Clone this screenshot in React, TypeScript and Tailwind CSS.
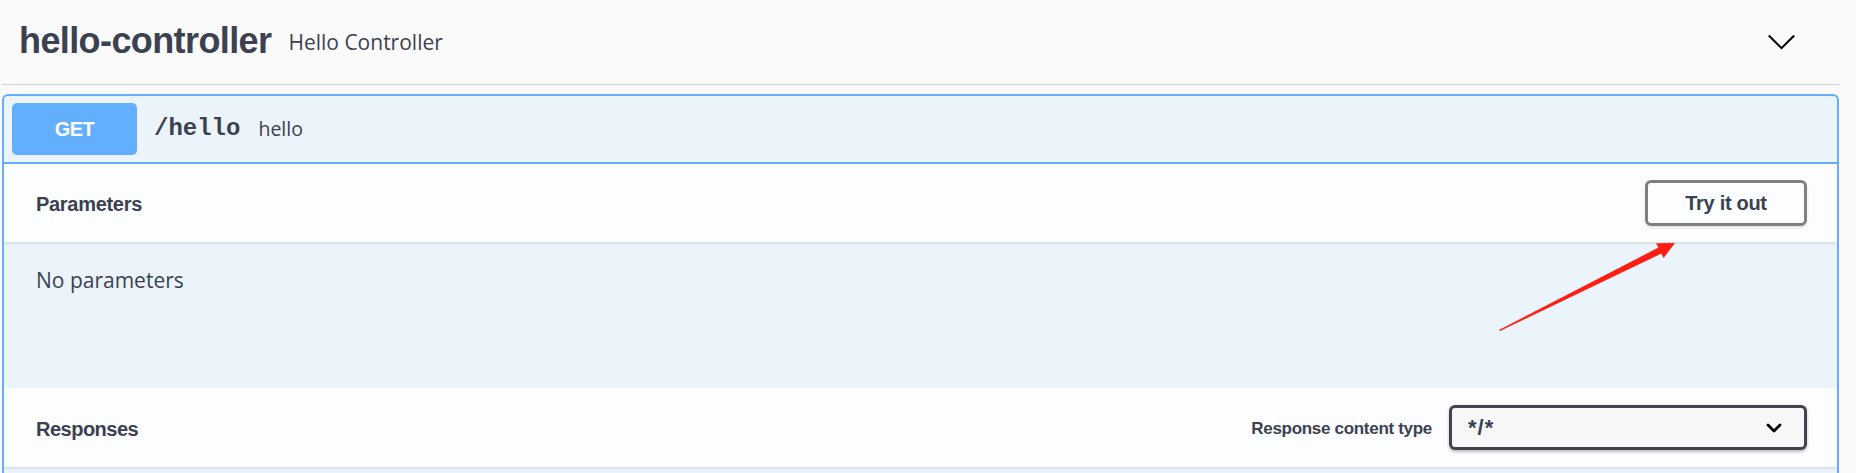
import { useState } from "react";

const bold = "font-['Liberation_Sans',Arial,sans-serif] font-bold";
const regular = "font-['Open_Sans','Noto_Sans',sans-serif]";

function ChevronDown({ className }: { className?: string }) {
  return (
    <svg className={className} viewBox="0 0 30 17" fill="none" stroke="currentColor" strokeWidth="2.2">
      <path d="M1.5 1.5 L15 15 L28.5 1.5" />
    </svg>
  );
}

function SmallChevron({ className }: { className?: string }) {
  return (
    <svg className={className} viewBox="0 0 16 10" fill="none" stroke="currentColor" strokeWidth="2.8" strokeLinecap="round" strokeLinejoin="round">
      <path d="M2 2 L8 8 L14 2" />
    </svg>
  );
}

// red annotation arrow drawn over the page
function Arrow() {
  return (
    <svg className="pointer-events-none absolute left-[1490px] top-[230px]" width="200" height="110" viewBox="0 0 200 110">
      <polygon
        fill="#ff1e12"
        points="10,101 171.3,23.6 173.6,28 185,13 166,13.3 168.4,17.6 9,100"
      />
    </svg>
  );
}

export default function App() {
  const [contentType] = useState("*/*");

  return (
    <div className="relative min-h-screen bg-[#fafafa] pl-[2px] pr-[17px] text-[#3b4151]">
      <div className="flex h-[85px] items-center justify-between border-b border-[#d2d3d6] pl-[17px] pr-[43px]">
        <div className="flex items-center">
          <h4 className={`${bold} text-[36px] leading-none tracking-[-0.6px] pb-[3px]`}>hello-controller</h4>
          <small className={`${regular} ml-[17px] text-[21px] leading-none`}>Hello Controller</small>
        </div>
        <ChevronDown className="h-[16px] w-[29px] text-black" />
      </div>

      <div className="mt-[9px] overflow-hidden rounded-[6px] border-2 border-[#61affe] bg-[#ebf3fb]">
        <div className="flex items-center border-b-2 border-[#61affe] py-[7px] pl-[8px]">
          <span className={`${bold} flex h-[52px] w-[125px] items-center justify-center rounded-[5px] bg-[#61affe] text-[20px] tracking-[-0.5px] text-white`}>
            GET
          </span>
          <span className="ml-[17px] font-['Liberation_Mono',monospace] text-[24px] font-bold leading-none">/hello</span>
          <span className={`${regular} ml-[18px] text-[19.5px] leading-none`}>hello</span>
        </div>

        <div className="flex h-[78px] items-center justify-between bg-white/80 pl-[32px] pr-[30px] shadow-[0_1.5px_3px_rgba(0,0,0,0.1)]">
          <h4 className={`${bold} pt-[2px] text-[20px] tracking-[-0.3px]`}>Parameters</h4>
          <button className={`${bold} h-[46px] w-[162px] rounded-[6px] border-[3px] border-[#808080] text-[20px] tracking-[-0.3px] shadow-[0_1.5px_3px_rgba(0,0,0,0.1)]`}>
            Try it out
          </button>
        </div>

        <div className="h-[146px] pl-[32px] pt-[23px]">
          <p className={`${regular} text-[21px] leading-[30px]`}>No parameters</p>
        </div>

        <div className="flex h-[79px] items-center justify-between bg-white/80 pl-[32px] pr-[30px] shadow-[0_1.5px_3px_rgba(0,0,0,0.1)]">
          <h4 className={`${bold} pt-[2px] text-[20px] tracking-[-0.5px]`}>Responses</h4>
          <div className="flex items-center">
            <span className={`${bold} mr-[17px] pt-[2px] text-[17px] tracking-[-0.3px]`}>Response content type</span>
            <div className="flex h-[45px] w-[358px] items-center justify-between rounded-[6px] border-[3px] border-[#41444e] bg-[#f7f7f7] pl-[16px] pr-[22px] shadow-[0_1.5px_3px_rgba(0,0,0,0.25)]">
              <span className={`${bold} text-[22px] tracking-[1px]`}>{contentType}</span>
              <SmallChevron className="h-[10px] w-[16px] text-black" />
            </div>
          </div>
        </div>

        <div className="h-[40px]" />
      </div>

      <Arrow />
    </div>
  );
}
